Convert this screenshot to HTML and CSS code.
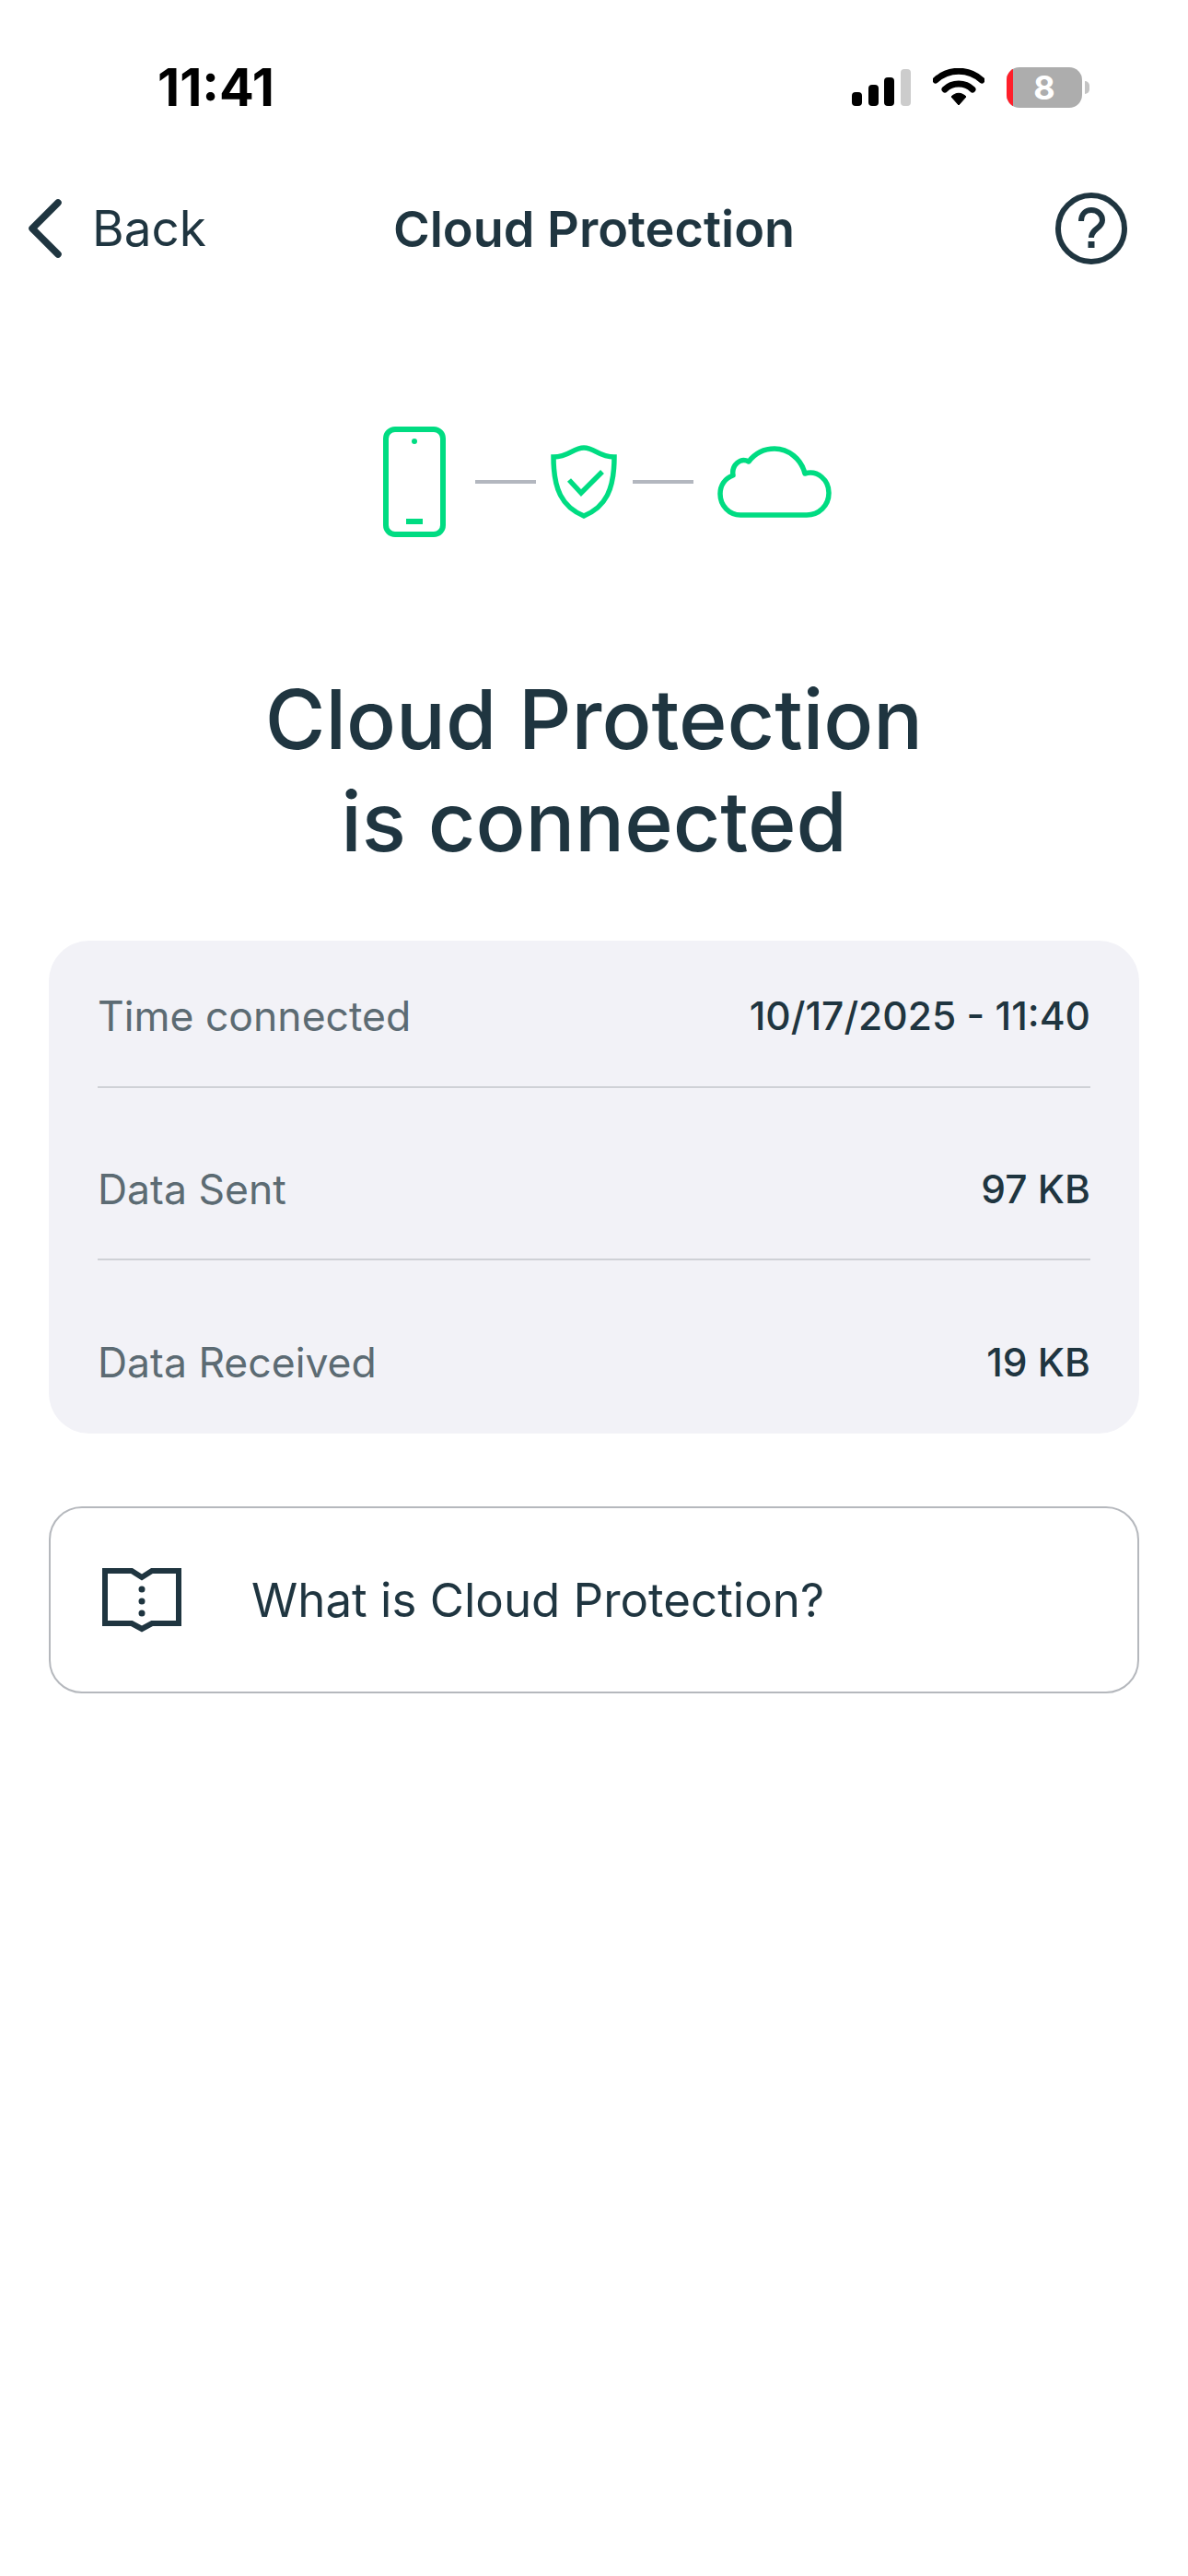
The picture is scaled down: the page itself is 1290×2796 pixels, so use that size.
FILE: index.html
```html
<!DOCTYPE html>
<html>
<head>
  <title>Cloud Protection</title>

  <link rel="stylesheet" href="styles.css">
</head>
<body>

  <div class="status-bar">
    <span class="clock">11:41</span>

    <div class="status-icons">
      <svg class="signal" width="66" height="42" viewBox="0 0 66 42">
        <rect x="1" y="26" width="11" height="15" rx="4" fill="#000"/>
        <rect x="19" y="18" width="11" height="23" rx="4" fill="#000"/>
        <rect x="36" y="10" width="11" height="31" rx="4" fill="#000"/>
        <rect x="54" y="1" width="11" height="40" rx="4" fill="#ccc"/>
      </svg>

      <svg class="wifi" width="56" height="42" viewBox="0 0 56 42">
        <path d="M3 13 C17 0 39 0 53 13" fill="none" stroke="#000" stroke-width="7" stroke-linecap="round"/>
        <path d="M13 23 C21 15 35 15 43 23" fill="none" stroke="#000" stroke-width="7" stroke-linecap="round"/>
        <path d="M20 31 C25 26 31 26 36 31 L28 40 Z" fill="#000" stroke="#000" stroke-width="1" stroke-linejoin="round"/>
      </svg>

      <div class="battery">
        <span class="battery-low"></span>
        <span class="battery-level">8</span>
      </div>
      <span class="battery-cap"></span>
    </div>
  </div>

  <nav class="nav-bar">
    <a class="back">
      <svg width="44" height="68" viewBox="0 0 44 68">
        <path d="M37 6 L9 34 L37 62" fill="none" stroke="#1f3540" stroke-width="7.5" stroke-linecap="round" stroke-linejoin="round"/>
      </svg>
      <span>Back</span>
    </a>

    <h2 class="nav-title">Cloud Protection</h2>

    <svg class="help" width="80" height="80" viewBox="0 0 80 80">
      <circle cx="40" cy="40" r="36" fill="none" stroke="#1f3540" stroke-width="6"/>
      <path d="M29 32 C29 24 34 20 40 20 C47 20 52 25 52 31 C52 40 40 40 40 50" fill="none" stroke="#1f3540" stroke-width="6"/>
      <rect x="36.500" y="54" width="7" height="7" fill="#1f3540"/>
    </svg>
  </nav>

  <div class="diagram">
    <svg width="68" height="120" viewBox="0 0 68 120">
      <rect x="3" y="3" width="62" height="114" rx="10" fill="none" stroke="#00dc82" stroke-width="6"/>
      <circle cx="34" cy="16" r="3" fill="#00dc82"/>
      <rect x="25" y="100" width="18" height="6" fill="#00dc82"/>
    </svg>

    <span class="link link-left"></span>

    <svg width="72" height="80" viewBox="0 0 72 80">
      <path d="M3 13 C20 13 24 3 36 3 C48 3 52 13 69 13 C69 48 60 67 36 77 C12 67 3 48 3 13 Z" fill="none" stroke="#00dc82" stroke-width="5.500"/>
      <path d="M20 38 L33 52 L56 29" fill="none" stroke="#00dc82" stroke-width="5.500"/>
    </svg>

    <span class="link link-right"></span>

    <svg width="124" height="80" viewBox="0 0 124 80">
      <path d="M25 76 H97 C110 76 121 66 121 52 C121 38 109 27 95 31 C91 15 77 4 62 4 C51 4 41 9 34 18 C25 13 15 22 17 33 C8 36 3 44 3 53 C3 66 13 76 25 76 Z" fill="none" stroke="#00dc82" stroke-width="5.500" stroke-linejoin="round"/>
    </svg>
  </div>

  <h1 class="headline">Cloud Protection<br>is connected</h1>

  <section class="stats">
    <div class="stat">
      <span class="stat-label">Time connected</span>
      <span class="stat-value">10/17/2025 - 11:40</span>
    </div>
    <div class="stat">
      <span class="stat-label">Data Sent</span>
      <span class="stat-value">97 KB</span>
    </div>
    <div class="stat">
      <span class="stat-label">Data Received</span>
      <span class="stat-value">19 KB</span>
    </div>
  </section>

  <a class="learn-more">
    <svg width="86" height="70" viewBox="0 0 86 70">
      <path d="M3 3 H32 L43 10 L54 3 H83 V60 H54 L43 66 L32 60 H3 Z" fill="none" stroke="#1f3540" stroke-width="6"/>
      <circle cx="43" cy="23" r="3.500" fill="#1f3540"/>
      <circle cx="43" cy="36" r="3.500" fill="#1f3540"/>
      <circle cx="43" cy="49" r="3.500" fill="#1f3540"/>
    </svg>
    <span>What is Cloud Protection?</span>
  </a>

</body>
</html>
```

FILE: styles.css
```css
* {
  box-sizing: border-box;
}

html, body {
  margin: 0;
  padding: 0;
  height: 100%;
  background: #fff;
  color: #1f3540;
  font-family: Inter, 'Noto Sans', sans-serif;
}

.status-bar {
  height: 169px;
  padding: 68px 0 0 171px;
  display: flex;
  justify-content: space-between;
}

.clock {
  font-family: Inter, sans-serif;
  font-size: 56px;
  font-weight: 700;
  line-height: 54px;
  color: #000;
}

.status-icons {
  display: flex;
  align-items: flex-start;
  padding-right: 107px;
}

.signal {
  margin: 6px 23px 0 0;
}

.wifi {
  margin: 6px 24px 0 0;
}

.battery {
  width: 82px;
  height: 44px;
  margin-top: 5px;
  border-radius: 14px;
  background: #adadad;
  overflow: hidden;
  display: flex;
  position: relative;
}

.battery-low {
  width: 7px;
  background: #ff1f2a;
}

.battery-level {
  flex: 1;
  text-align: center;
  color: #fff;
  font-size: 36px;
  font-weight: 700;
  line-height: 44px;
  padding-right: 7px;
}

.battery-cap {
  width: 5px;
  height: 14px;
  margin: 20px 0 0 3px;
  border-radius: 0 7px 7px 0;
  background: #c4c4c4;
}

.nav-bar {
  height: 158px;
  display: flex;
  align-items: center;
  justify-content: space-between;
  padding: 0 65px 0 26px;
  position: relative;
}

.back {
  display: flex;
  align-items: center;
  gap: 30px;
  font-size: 53px;
}

.nav-title {
  position: absolute;
  left: 0;
  right: 0;
  margin: 0;
  text-align: center;
  font-size: 54px;
  font-weight: 600;
}

.help {
  position: relative;
}

.diagram {
  margin-top: 136px;
  padding-left: 416px;
  height: 120px;
  display: flex;
  align-items: center;
}

.link {
  width: 66px;
  height: 4px;
  background: #b3b7bf;
}

.link-left {
  margin: 0 16px 0 32px;
}

.link-right {
  margin: 0 26px 0 17px;
}

.headline {
  margin: 142px 0 0;
  text-align: center;
  font-size: 89.5px;
  font-weight: 500;
  line-height: 111px;
}

.stats {
  margin: 74px 53px 0;
  padding: 0 53px;
  background: #f2f2f7;
  border-radius: 44px;
}

.stat {
  display: flex;
  justify-content: space-between;
  align-items: center;
  height: 187px;
  padding: 35px 0 0;
  border-bottom: 2px solid #cfd1d6;
  line-height: 50px;
}

.stat:first-child {
  height: 160px;
  padding-top: 6px;
}

.stat:last-child {
  border-bottom: 0;
  height: 188px;
  padding-top: 33px;
}

.stat-label {
  color: #5c6b73;
  font-size: 44.5px;
}

.stat-value {
  color: #1f3540;
  font-size: 42.5px;
  font-weight: 500;
}

.learn-more {
  margin: 79px 53px 0;
  height: 203px;
  padding: 0 0 0 56px;
  display: flex;
  align-items: center;
  gap: 76px;
  border: 2px solid #b5b8bd;
  border-radius: 36px;
  font-size: 51px;
}
```
